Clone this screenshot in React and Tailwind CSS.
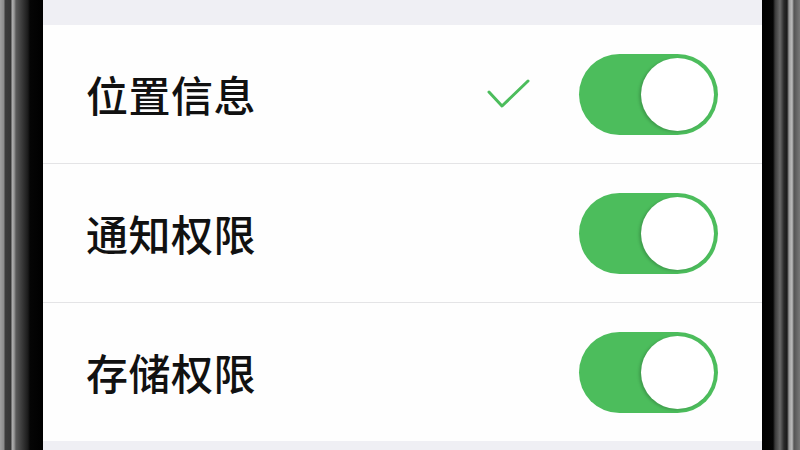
const rows = [
  { label: "位置信息", check: true },
  { label: "通知权限", check: false },
  { label: "存储权限", check: false },
];

function Toggle() {
  return (
    <div className="w-[139px] h-[81px] rounded-full bg-[#4cbd5c] flex items-center justify-end p-[4px] shrink-0">
      <div className="w-[73px] h-[73px] rounded-full bg-white shadow-[-2px_1px_3px_rgba(0,0,0,0.18)]" />
    </div>
  );
}

function Check() {
  return (
    <svg width="44" height="32" viewBox="0 0 44 32" className="shrink-0">
      <path d="M2 13 L15 27 L41 2" fill="none" stroke="#4cbd5c" strokeWidth="3" strokeLinecap="round" strokeLinejoin="round" />
    </svg>
  );
}

export default function App() {
  return (
    <div className="w-[800px] h-[450px] flex overflow-hidden bg-black font-['Noto_Sans_CJK_SC','Noto_Sans',sans-serif]">
      <div className="w-[43px] h-full shrink-0 bg-[linear-gradient(to_right,#a0a0a0_0px,#8a8a8a_4px,#3c3c3c_5px,#353535_11px,#b0b0b0_12px,#9a9a9a_14px,#5a5a5a_16px,#3a3a3a_22px,#1a1a1a_28px,#050505_30px,#000_43px)]" />
      <div className="flex-1 flex flex-col bg-[#efeff4]">
        <div className="h-[25px] shrink-0" />
        <div className="bg-[#fefefe] flex flex-col">
          {rows.map((r, i) => (
            <div key={r.label} className={i < rows.length - 1 ? "pl-[43px] border-b border-[#e4e4e6]" : "pl-[43px]"}>
              <div className="h-[138px] flex items-center pr-[44px]">
                <span className="text-[42px] leading-none font-medium text-[#111] tracking-[0.5px]">{r.label}</span>
                <div className="flex-1" />
                {r.check && <div className="mr-[48px] mt-[2px]"><Check /></div>}
                <Toggle />
              </div>
            </div>
          ))}
        </div>
        <div className="flex-1" />
      </div>
      <div className="w-[38px] h-full shrink-0 bg-[linear-gradient(to_right,#000_0px,#050505_11px,#3a3a3a_13px,#6a6a6a_18px,#2a2a2a_22px,#1a1a1a_25px,#9a9a9a_27px,#bdbdbd_30px,#555_32px,#777_38px)]" />
    </div>
  );
}
